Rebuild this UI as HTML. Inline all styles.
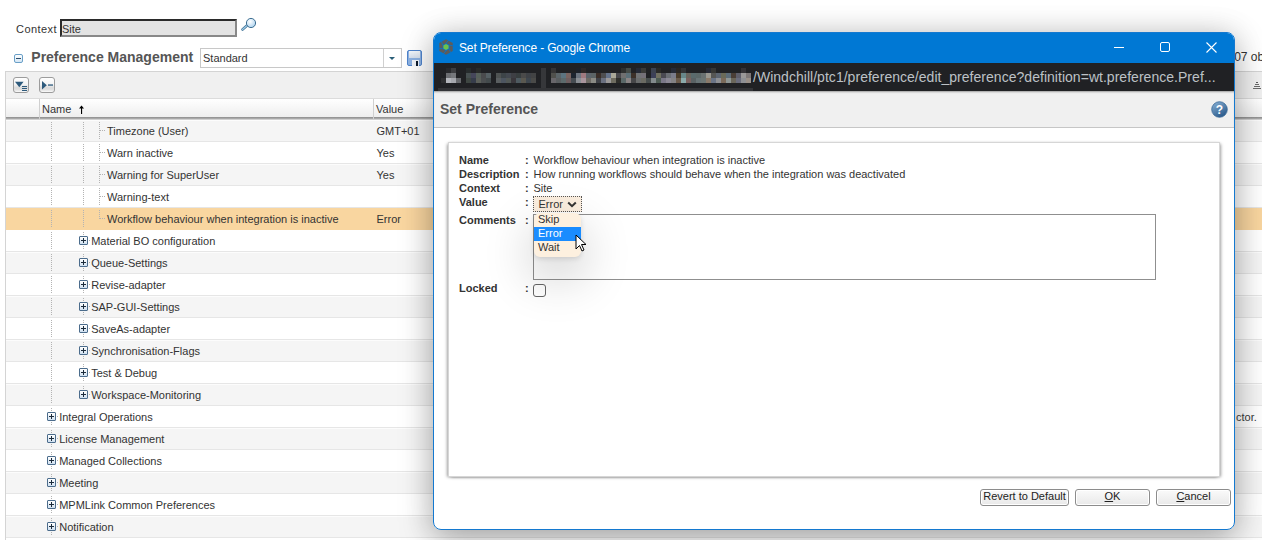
<!DOCTYPE html>
<html><head><meta charset="utf-8">
<style>
*{box-sizing:border-box}
html,body{margin:0;padding:0;width:1262px;height:540px;overflow:hidden;background:#fff;font-family:"Liberation Sans",sans-serif;color:#333}
.a{position:absolute;white-space:nowrap}
.t11{font-size:11px;line-height:13px}
.row{position:absolute;left:6px;width:1256px;height:22px;border-bottom:1px solid #e6e6e6}
.g{background:#f5f5f5;box-shadow:inset 0 1px 0 #fcfcfc}
.w{background:#fff}
.hl{background:#f9d6a0;border-bottom-color:#f9d6a0}
.vd{position:absolute;width:1px;top:0;height:22px;background-image:linear-gradient(#b3b3b3 50%,transparent 50%);background-size:1px 2px}
.hd{position:absolute;height:1px;width:6px;top:10px;background-image:linear-gradient(90deg,#b3b3b3 50%,transparent 50%);background-size:2px 1px}
.plus{position:absolute;width:9px;height:9px;border:1px solid #4b6c8c;border-radius:1px;background:linear-gradient(#fff,#cfe0f0)}
.plus:before{content:"";position:absolute;left:1px;top:3px;width:5px;height:1px;background:#1b2b3b}
.plus:after{content:"";position:absolute;left:3px;top:1px;width:1px;height:5px;background:#1b2b3b}
.rt{position:absolute;top:5px;font-size:11px;line-height:13px;color:#333;white-space:nowrap}
.btn{border:1px solid #8c8c8c;border-radius:3px;background:linear-gradient(#fafafa,#e9e9e9);box-shadow:inset 0 0 0 1px #fff;font-size:11px;line-height:13px;text-align:center;color:#222}
</style></head><body>

<!-- Context -->
<div class="a" style="left:16px;top:23px;font-size:11px;line-height:13px;color:#333;letter-spacing:0.45px">Context</div>
<div class="a" style="left:60px;top:19px;width:177px;height:18px;background:#e3e3e3;border:2px solid;border-color:#2a2a2a #888 #888 #2a2a2a"></div>
<div class="a" style="left:62px;top:23px;font-size:11px;line-height:13px;color:#333">Site</div>
<svg class="a" style="left:240px;top:16px" width="18" height="16" viewBox="0 0 18 16">
 <defs><radialGradient id="mg" cx="0.4" cy="0.35" r="0.7"><stop offset="0" stop-color="#fff"/><stop offset="1" stop-color="#a9d0ee"/></radialGradient></defs>
 <line x1="2.5" y1="13.5" x2="7" y2="9.5" stroke="#3e6f92" stroke-width="2.6" stroke-linecap="round"/>
 <line x1="2.5" y1="13.5" x2="7" y2="9.5" stroke="#9ccbe8" stroke-width="1.2" stroke-linecap="round"/>
 <circle cx="11" cy="7" r="4.6" fill="url(#mg)" stroke="#3e6f92" stroke-width="1"/>
</svg>

<!-- Preference Management -->
<div class="a" style="left:14px;top:54px;width:9px;height:9px;border:1px solid #6aa0c8;border-radius:2px;background:linear-gradient(#fff,#d4e6f5)"></div>
<div class="a" style="left:16px;top:58px;width:5px;height:1px;background:#2d4d6b"></div>
<div class="a" style="left:31.3px;top:49px;font-size:14px;line-height:16px;font-weight:bold;color:#555">Preference Management</div>
<div class="a" style="left:200px;top:48px;width:202px;height:20px;border:1px solid #c8c8c8;background:#fff"></div>
<div class="a" style="left:383px;top:49px;width:1px;height:18px;background:#d0d0d0"></div>
<div class="a" style="left:203px;top:52px;font-size:11px;line-height:13px;color:#333">Standard</div>
<div class="a" style="left:389px;top:57px;width:0;height:0;border-left:3px solid transparent;border-right:3px solid transparent;border-top:3px solid #2b5f78"></div>
<svg class="a" style="left:407px;top:50px" width="16" height="17" viewBox="0 0 16 17">
 <defs><linearGradient id="sg" x1="0" y1="0" x2="0" y2="1"><stop offset="0" stop-color="#f4f7fb"/><stop offset="1" stop-color="#d6e0ee"/></linearGradient></defs>
 <rect x="0.5" y="0.5" width="14" height="15" rx="1.5" fill="#8db2e3" stroke="#4f84cc"/>
 <rect x="2" y="1" width="11" height="7" fill="url(#sg)"/>
 <rect x="5" y="10" width="7" height="6" fill="#f2f5fa"/>
 <rect x="9" y="11" width="2" height="5" fill="#0d1a2b"/>
</svg>
<div class="a" style="left:1227.5px;top:50px;font-size:12px;line-height:14px;color:#333">207 objects</div>
<div class="a" style="left:1236px;top:411px;font-size:11px;line-height:13px;color:#333;z-index:1">ctor.</div>
<svg class="a" style="left:1252px;top:80px;z-index:1" width="10" height="10" viewBox="0 0 10 10" shape-rendering="crispEdges"><rect x="4" y="2" width="2" height="1" fill="#555"/><rect x="3" y="4" width="4" height="1" fill="#666"/><rect x="2" y="6" width="6" height="1" fill="#666"/><rect x="1" y="8" width="8" height="1" fill="#666"/></svg>

<!-- Table frame -->
<div class="a" style="left:5px;top:71px;width:1262px;height:469px;border-left:1px solid #d4d4d4;border-top:1px solid #d4d4d4"></div>
<div class="a" style="left:6px;top:72px;width:1256px;height:26px;background:#f0f0f0"></div>
<!-- toolbar buttons -->
<div class="a" style="left:13px;top:77px;width:16px;height:16px;border:1px solid #9c9c9c;border-radius:3px;background:linear-gradient(#fefefe 0%,#f4f4f4 45%,#dadada 70%,#e2e2e2 85%,#fbfbfb 100%)"></div>
<svg class="a" style="left:14px;top:78px" width="14" height="14" viewBox="0 0 14 14">
 <path d="M1 3.8 H9.6 L5.3 9.2 Z" fill="#2d5a7c"/>
 <rect x="8" y="8" width="5" height="1" fill="#2d5a7c"/><rect x="8" y="10" width="5" height="1" fill="#2d5a7c"/><rect x="8" y="12" width="5" height="1" fill="#2d5a7c"/>
</svg>
<div class="a" style="left:39px;top:77px;width:16px;height:16px;border:1px solid #9c9c9c;border-radius:3px;background:linear-gradient(#fefefe 0%,#f4f4f4 45%,#dadada 70%,#e2e2e2 85%,#fbfbfb 100%)"></div>
<svg class="a" style="left:40px;top:78px" width="14" height="14" viewBox="0 0 14 14">
 <path d="M2 3 L6.8 7.2 L2 11.4 Z" fill="#2d5a7c"/>
 <rect x="8" y="6.4" width="5" height="1.3" fill="#2d5a7c"/>
</svg>
<!-- header -->
<div class="a" style="left:6px;top:98px;width:1256px;height:21px;background:linear-gradient(#ffffff,#ececec);border-top:1px solid #dcdcdc"></div>
<div class="a" style="left:6px;top:117px;width:1256px;height:3px;background:linear-gradient(#8c8c8c,#a8a8a8 50%,#e4e4e4)"></div>
<div class="a" style="left:39px;top:99px;width:1px;height:20px;background:#d0d0d0"></div>
<div class="a" style="left:373px;top:99px;width:1px;height:20px;background:#d0d0d0"></div>
<div class="a t11" style="left:42px;top:103px;color:#333">Name</div>
<svg class="a" style="left:78px;top:105px" width="7" height="10" viewBox="0 0 7 10"><path d="M3.5 0.5 L6 3.5 L1 3.5 Z" fill="#000"/><rect x="3" y="2" width="1.1" height="7" fill="#000"/></svg>
<div class="a t11" style="left:376px;top:103px;color:#333">Value</div>

<!-- rows -->
<div class="row g" style="top:120px"><div class="vd" style="left:45px;top:2px;height:18px"></div><div class="vd" style="left:77px;top:2px;height:18px"></div><div class="vd" style="left:93px;top:2px;height:18px"></div><div class="hd" style="left:94px"></div><div class="rt" style="left:101px">Timezone (User)</div><div class="rt" style="left:370.5px">GMT+01</div></div>
<div class="row w" style="top:142px"><div class="vd" style="left:45px;top:2px;height:18px"></div><div class="vd" style="left:77px;top:2px;height:18px"></div><div class="vd" style="left:93px;top:2px;height:18px"></div><div class="hd" style="left:94px"></div><div class="rt" style="left:101px">Warn inactive</div><div class="rt" style="left:370.5px">Yes</div></div>
<div class="row g" style="top:164px"><div class="vd" style="left:45px;top:2px;height:18px"></div><div class="vd" style="left:77px;top:2px;height:18px"></div><div class="vd" style="left:93px;top:2px;height:18px"></div><div class="hd" style="left:94px"></div><div class="rt" style="left:101px">Warning for SuperUser</div><div class="rt" style="left:370.5px">Yes</div></div>
<div class="row w" style="top:186px"><div class="vd" style="left:45px;top:2px;height:18px"></div><div class="vd" style="left:77px;top:2px;height:18px"></div><div class="vd" style="left:93px;top:2px;height:18px"></div><div class="hd" style="left:94px"></div><div class="rt" style="left:101px">Warning-text</div></div>
<div class="row hl" style="top:208px"><div class="vd" style="left:45px;top:2px;height:18px"></div><div class="vd" style="left:77px;top:2px;height:18px"></div><div class="vd" style="left:93px;top:2px;height:9px"></div><div class="hd" style="left:94px"></div><div class="rt" style="left:101px">Workflow behaviour when integration is inactive</div><div class="rt" style="left:370.5px">Error</div></div>
<div class="row w" style="top:230px"><div class="vd" style="left:45px;top:2px;height:18px"></div><div class="vd" style="left:77px;top:2px;height:4px"></div><div class="vd" style="left:77px;top:16px;height:4px"></div><div class="plus" style="left:73px;top:6px"></div><div class="hd" style="left:83px;width:2px"></div><div class="rt" style="left:85.2px">Material BO configuration</div></div>
<div class="row g" style="top:252px"><div class="vd" style="left:45px;top:2px;height:18px"></div><div class="vd" style="left:77px;top:2px;height:4px"></div><div class="vd" style="left:77px;top:16px;height:4px"></div><div class="plus" style="left:73px;top:6px"></div><div class="hd" style="left:83px;width:2px"></div><div class="rt" style="left:85.2px">Queue-Settings</div></div>
<div class="row w" style="top:274px"><div class="vd" style="left:45px;top:2px;height:18px"></div><div class="vd" style="left:77px;top:2px;height:4px"></div><div class="vd" style="left:77px;top:16px;height:4px"></div><div class="plus" style="left:73px;top:6px"></div><div class="hd" style="left:83px;width:2px"></div><div class="rt" style="left:85.2px">Revise-adapter</div></div>
<div class="row g" style="top:296px"><div class="vd" style="left:45px;top:2px;height:18px"></div><div class="vd" style="left:77px;top:2px;height:4px"></div><div class="vd" style="left:77px;top:16px;height:4px"></div><div class="plus" style="left:73px;top:6px"></div><div class="hd" style="left:83px;width:2px"></div><div class="rt" style="left:85.2px">SAP-GUI-Settings</div></div>
<div class="row w" style="top:318px"><div class="vd" style="left:45px;top:2px;height:18px"></div><div class="vd" style="left:77px;top:2px;height:4px"></div><div class="vd" style="left:77px;top:16px;height:4px"></div><div class="plus" style="left:73px;top:6px"></div><div class="hd" style="left:83px;width:2px"></div><div class="rt" style="left:85.2px">SaveAs-adapter</div></div>
<div class="row g" style="top:340px"><div class="vd" style="left:45px;top:2px;height:18px"></div><div class="vd" style="left:77px;top:2px;height:4px"></div><div class="vd" style="left:77px;top:16px;height:4px"></div><div class="plus" style="left:73px;top:6px"></div><div class="hd" style="left:83px;width:2px"></div><div class="rt" style="left:85.2px">Synchronisation-Flags</div></div>
<div class="row w" style="top:362px"><div class="vd" style="left:45px;top:2px;height:18px"></div><div class="vd" style="left:77px;top:2px;height:4px"></div><div class="vd" style="left:77px;top:16px;height:4px"></div><div class="plus" style="left:73px;top:6px"></div><div class="hd" style="left:83px;width:2px"></div><div class="rt" style="left:85.2px">Test &amp; Debug</div></div>
<div class="row g" style="top:384px"><div class="vd" style="left:45px;top:2px;height:18px"></div><div class="vd" style="left:77px;top:2px;height:4px"></div><div class="plus" style="left:73px;top:6px"></div><div class="hd" style="left:83px;width:2px"></div><div class="rt" style="left:85.2px">Workspace-Monitoring</div></div>
<div class="row w" style="top:406px"><div class="vd" style="left:45px;top:2px;height:4px"></div><div class="vd" style="left:45px;top:16px;height:4px"></div><div class="plus" style="left:41px;top:6px"></div><div class="hd" style="left:51px;width:2px"></div><div class="rt" style="left:53.2px">Integral Operations</div></div>
<div class="row g" style="top:428px"><div class="vd" style="left:45px;top:2px;height:4px"></div><div class="vd" style="left:45px;top:16px;height:4px"></div><div class="plus" style="left:41px;top:6px"></div><div class="hd" style="left:51px;width:2px"></div><div class="rt" style="left:53.2px">License Management</div></div>
<div class="row w" style="top:450px"><div class="vd" style="left:45px;top:2px;height:4px"></div><div class="vd" style="left:45px;top:16px;height:4px"></div><div class="plus" style="left:41px;top:6px"></div><div class="hd" style="left:51px;width:2px"></div><div class="rt" style="left:53.2px">Managed Collections</div></div>
<div class="row g" style="top:472px"><div class="vd" style="left:45px;top:2px;height:4px"></div><div class="vd" style="left:45px;top:16px;height:4px"></div><div class="plus" style="left:41px;top:6px"></div><div class="hd" style="left:51px;width:2px"></div><div class="rt" style="left:53.2px">Meeting</div></div>
<div class="row w" style="top:494px"><div class="vd" style="left:45px;top:2px;height:4px"></div><div class="vd" style="left:45px;top:16px;height:4px"></div><div class="plus" style="left:41px;top:6px"></div><div class="hd" style="left:51px;width:2px"></div><div class="rt" style="left:53.2px">MPMLink Common Preferences</div></div>
<div class="row g" style="top:516px"><div class="vd" style="left:45px;top:2px;height:4px"></div><div class="vd" style="left:45px;top:16px;height:4px"></div><div class="plus" style="left:41px;top:6px"></div><div class="hd" style="left:51px;width:2px"></div><div class="rt" style="left:53.2px">Notification</div></div>

<!-- Dialog shadow -->
<div class="a" style="left:433px;top:32px;width:802px;height:498px;border-radius:8px;box-shadow:0 10px 34px rgba(0,0,0,0.27),0 0 30px rgba(0,0,0,0.12)"></div>
<!-- Dialog -->
<div class="a" id="dlg" style="left:433px;top:32px;width:802px;height:498px;border-radius:8px;border:1px solid #1479d0;background:#fff;overflow:hidden">
 <div class="a" style="left:0;top:0;width:800px;height:30px;background:#0078d4"></div>
 <svg class="a" style="left:4px;top:5px" width="16" height="18" viewBox="-8 -9 16 18">
  <polygon points="0.00,-7.80 6.75,-3.90 6.75,3.90 0.00,7.80 -6.75,3.90 -6.75,-3.90" fill="#5c5c5c"/>
  <line x1="0.00" y1="-3.70" x2="3.21" y2="-7.53" stroke="#0a74c8" stroke-width="0.9"/><line x1="3.20" y1="-1.85" x2="8.13" y2="-0.98" stroke="#0a74c8" stroke-width="0.9"/><line x1="3.20" y1="1.85" x2="4.91" y2="6.55" stroke="#0a74c8" stroke-width="0.9"/><line x1="0.00" y1="3.70" x2="-3.21" y2="7.53" stroke="#0a74c8" stroke-width="0.9"/><line x1="-3.20" y1="1.85" x2="-8.13" y2="0.98" stroke="#0a74c8" stroke-width="0.9"/><line x1="-3.20" y1="-1.85" x2="-4.91" y2="-6.55" stroke="#0a74c8" stroke-width="0.9"/>
  <polygon points="0.00,-3.90 3.38,-1.95 3.38,1.95 0.00,3.90 -3.38,1.95 -3.38,-1.95" fill="#0a74c8"/>
  <polygon points="0.00,-3.00 2.60,-1.50 2.60,1.50 0.00,3.00 -2.60,1.50 -2.60,-1.50" fill="#6cc24a"/>
 </svg>
 <div class="a" style="left:25px;top:8px;font-size:12px;line-height:14px;color:#fff;letter-spacing:-0.15px">Set Preference - Google Chrome</div>
 <div class="a" style="left:680px;top:14px;width:10px;height:1px;background:#fff"></div>
 <div class="a" style="left:726px;top:9px;width:10px;height:10px;border:1px solid #fff;border-radius:2px"></div>
 <svg class="a" style="left:772px;top:9px" width="11" height="11" viewBox="0 0 11 11"><path d="M0.5 0.5 L10.5 10.5 M10.5 0.5 L0.5 10.5" stroke="#fff" stroke-width="1.1"/></svg>
 <div class="a" style="left:0;top:30px;width:800px;height:28px;background:#202124"></div>
 <svg class="a" style="left:0;top:0" width="800" height="62" shape-rendering="crispEdges"><rect x="12" y="35" width="5" height="5" fill="#28292c"/><rect x="17" y="35" width="5" height="5" fill="#3d3e41"/><rect x="32" y="35" width="5" height="5" fill="#272c2d"/><rect x="37" y="35" width="5" height="5" fill="#222126"/><rect x="42" y="35" width="5" height="5" fill="#292b2a"/><rect x="117" y="35" width="5" height="5" fill="#353435"/><rect x="142" y="35" width="5" height="5" fill="#1e222a"/><rect x="147" y="35" width="5" height="5" fill="#2e2828"/><rect x="187" y="35" width="5" height="5" fill="#2e302f"/><rect x="192" y="35" width="5" height="5" fill="#464c48"/><rect x="202" y="35" width="5" height="5" fill="#262a36"/><rect x="207" y="35" width="5" height="5" fill="#3a3a38"/><rect x="217" y="35" width="5" height="5" fill="#3c4250"/><rect x="222" y="35" width="5" height="5" fill="#2a2a28"/><rect x="237" y="35" width="5" height="5" fill="#262a36"/><rect x="242" y="35" width="5" height="5" fill="#2a2622"/><rect x="247" y="35" width="5" height="5" fill="#333436"/><rect x="272" y="35" width="5" height="5" fill="#262a36"/><rect x="277" y="35" width="5" height="5" fill="#363634"/><rect x="307" y="35" width="5" height="5" fill="#343236"/><rect x="12" y="40" width="5" height="5" fill="#6b6d71"/><rect x="17" y="40" width="5" height="5" fill="#76787c"/><rect x="32" y="40" width="5" height="5" fill="#464f50"/><rect x="37" y="40" width="5" height="5" fill="#45465a"/><rect x="42" y="40" width="5" height="5" fill="#56605a"/><rect x="47" y="40" width="5" height="5" fill="#4a4b4d"/><rect x="52" y="40" width="5" height="5" fill="#566064"/><rect x="62" y="40" width="5" height="5" fill="#4e5252"/><rect x="67" y="40" width="5" height="5" fill="#3d4448"/><rect x="72" y="40" width="5" height="5" fill="#434850"/><rect x="77" y="40" width="5" height="5" fill="#3e3f44"/><rect x="82" y="40" width="5" height="5" fill="#373d3e"/><rect x="87" y="40" width="5" height="5" fill="#4a4a4a"/><rect x="92" y="40" width="5" height="5" fill="#3e4146"/><rect x="97" y="40" width="5" height="5" fill="#424344"/><rect x="117" y="40" width="5" height="5" fill="#50504c"/><rect x="122" y="40" width="5" height="5" fill="#5b6468"/><rect x="127" y="40" width="5" height="5" fill="#5c7480"/><rect x="132" y="40" width="5" height="5" fill="#7a6460"/><rect x="137" y="40" width="5" height="5" fill="#1e2530"/><rect x="142" y="40" width="5" height="5" fill="#6c7480"/><rect x="147" y="40" width="5" height="5" fill="#a07a80"/><rect x="152" y="40" width="5" height="5" fill="#5c646c"/><rect x="157" y="40" width="5" height="5" fill="#5c6466"/><rect x="162" y="40" width="5" height="5" fill="#3a2e28"/><rect x="167" y="40" width="5" height="5" fill="#4e4e50"/><rect x="172" y="40" width="5" height="5" fill="#64728a"/><rect x="177" y="40" width="5" height="5" fill="#aaa898"/><rect x="182" y="40" width="5" height="5" fill="#48484c"/><rect x="187" y="40" width="5" height="5" fill="#707070"/><rect x="192" y="40" width="5" height="5" fill="#5c7078"/><rect x="197" y="40" width="5" height="5" fill="#3c3028"/><rect x="202" y="40" width="5" height="5" fill="#707274"/><rect x="207" y="40" width="5" height="5" fill="#747078"/><rect x="217" y="40" width="5" height="5" fill="#3c4058"/><rect x="222" y="40" width="5" height="5" fill="#707060"/><rect x="227" y="40" width="5" height="5" fill="#4a4a52"/><rect x="232" y="40" width="5" height="5" fill="#6a6e74"/><rect x="237" y="40" width="5" height="5" fill="#7a7c8a"/><rect x="242" y="40" width="5" height="5" fill="#4a3c2a"/><rect x="247" y="40" width="5" height="5" fill="#68888a"/><rect x="252" y="40" width="5" height="5" fill="#6a665e"/><rect x="257" y="40" width="5" height="5" fill="#5a6a6c"/><rect x="262" y="40" width="5" height="5" fill="#5c6868"/><rect x="267" y="40" width="5" height="5" fill="#6a7272"/><rect x="272" y="40" width="5" height="5" fill="#9a9890"/><rect x="277" y="40" width="5" height="5" fill="#565654"/><rect x="282" y="40" width="5" height="5" fill="#5c6470"/><rect x="287" y="40" width="5" height="5" fill="#6a6a58"/><rect x="292" y="40" width="5" height="5" fill="#5c6c78"/><rect x="297" y="40" width="5" height="5" fill="#4a3e36"/><rect x="302" y="40" width="5" height="5" fill="#5e5e6a"/><rect x="307" y="40" width="5" height="5" fill="#9a9898"/><rect x="312" y="40" width="5" height="5" fill="#7e7878"/><rect x="7" y="45" width="5" height="5" fill="#2e2f31"/><rect x="12" y="45" width="5" height="5" fill="#b4b6bc"/><rect x="17" y="45" width="5" height="5" fill="#a5a7ad"/><rect x="22" y="45" width="5" height="5" fill="#66686c"/><rect x="32" y="45" width="5" height="5" fill="#3e4642"/><rect x="37" y="45" width="5" height="5" fill="#363c4a"/><rect x="42" y="45" width="5" height="5" fill="#5c605a"/><rect x="47" y="45" width="5" height="5" fill="#4b4e50"/><rect x="52" y="45" width="5" height="5" fill="#434a4c"/><rect x="62" y="45" width="5" height="5" fill="#5a5e60"/><rect x="67" y="45" width="5" height="5" fill="#4d5560"/><rect x="72" y="45" width="5" height="5" fill="#525856"/><rect x="77" y="45" width="5" height="5" fill="#3a373c"/><rect x="82" y="45" width="5" height="5" fill="#4e5a60"/><rect x="87" y="45" width="5" height="5" fill="#5a5850"/><rect x="92" y="45" width="5" height="5" fill="#3e464e"/><rect x="97" y="45" width="5" height="5" fill="#4a4a48"/><rect x="117" y="45" width="5" height="5" fill="#68666a"/><rect x="122" y="45" width="5" height="5" fill="#5a5e60"/><rect x="127" y="45" width="5" height="5" fill="#5c6a6c"/><rect x="132" y="45" width="5" height="5" fill="#6e5e60"/><rect x="137" y="45" width="5" height="5" fill="#464c52"/><rect x="142" y="45" width="5" height="5" fill="#8a8e94"/><rect x="147" y="45" width="5" height="5" fill="#a8949c"/><rect x="152" y="45" width="5" height="5" fill="#6e6a64"/><rect x="157" y="45" width="5" height="5" fill="#8a8a84"/><rect x="162" y="45" width="5" height="5" fill="#3e4046"/><rect x="167" y="45" width="5" height="5" fill="#6a7080"/><rect x="172" y="45" width="5" height="5" fill="#9a9898"/><rect x="177" y="45" width="5" height="5" fill="#6e6c60"/><rect x="182" y="45" width="5" height="5" fill="#2e2e2a"/><rect x="187" y="45" width="5" height="5" fill="#5a6868"/><rect x="192" y="45" width="5" height="5" fill="#8a8484"/><rect x="197" y="45" width="5" height="5" fill="#464648"/><rect x="202" y="45" width="5" height="5" fill="#6a6c6c"/><rect x="207" y="45" width="5" height="5" fill="#6a6a62"/><rect x="212" y="45" width="5" height="5" fill="#464c4c"/><rect x="217" y="45" width="5" height="5" fill="#828a8c"/><rect x="222" y="45" width="5" height="5" fill="#4e5c54"/><rect x="227" y="45" width="5" height="5" fill="#7a7888"/><rect x="232" y="45" width="5" height="5" fill="#8a8894"/><rect x="237" y="45" width="5" height="5" fill="#828284"/><rect x="242" y="45" width="5" height="5" fill="#6a5a4a"/><rect x="247" y="45" width="5" height="5" fill="#8aaaaa"/><rect x="252" y="45" width="5" height="5" fill="#7a6260"/><rect x="257" y="45" width="5" height="5" fill="#5a6264"/><rect x="262" y="45" width="5" height="5" fill="#687476"/><rect x="267" y="45" width="5" height="5" fill="#6c7674"/><rect x="272" y="45" width="5" height="5" fill="#8a7a6a"/><rect x="277" y="45" width="5" height="5" fill="#6a7486"/><rect x="282" y="45" width="5" height="5" fill="#8e9094"/><rect x="287" y="45" width="5" height="5" fill="#7a6a5a"/><rect x="292" y="45" width="5" height="5" fill="#8e9694"/><rect x="297" y="45" width="5" height="5" fill="#6a665a"/><rect x="302" y="45" width="5" height="5" fill="#6a6c7c"/><rect x="307" y="45" width="5" height="5" fill="#8e9094"/><rect x="312" y="45" width="5" height="5" fill="#9a9088"/><rect x="107" y="35" width="5" height="20" fill="#36373a"/><rect x="4" y="55" width="315" height="3" fill="#333437"/></svg>
 <div class="a" style="left:319px;top:36px;font-size:14px;line-height:16px;color:#bdc1c6;letter-spacing:0.03px">/Windchill/ptc1/preference/edit_preference?definition=wt.preference.Pref...</div>
 <div class="a" style="left:0;top:58px;width:800px;height:37px;background:#f0f0f0;border-bottom:1px solid #c6c6c6;box-shadow:inset 0 2px 2px -1px rgba(0,0,0,0.35)"></div>
 <div class="a" style="left:6px;top:68px;font-size:14px;line-height:16px;font-weight:bold;color:#555">Set Preference</div>
 <svg class="a" style="left:777.2px;top:68.3px" width="17" height="17" viewBox="0 0 17 17">
  <defs><linearGradient id="hg" x1="0" y1="0" x2="0.6" y2="1"><stop offset="0" stop-color="#8db4d8"/><stop offset="1" stop-color="#2b5b8c"/></linearGradient></defs>
  <circle cx="8.5" cy="8.5" r="7.8" fill="url(#hg)" stroke="#3a6a98" stroke-width="0.8"/>
  <text x="8.5" y="13" text-anchor="middle" font-family="Liberation Sans" font-weight="bold" font-size="12" fill="#fff">?</text>
 </svg>
 <!-- panel -->
 <div class="a" style="left:14px;top:109px;width:772px;height:335px;background:#fff;border:1px solid #d6d6d6;box-shadow:2px 1px 3px -1px rgba(0,0,0,0.35),-2px 1px 3px -1px rgba(0,0,0,0.35),0 0 2px rgba(0,0,0,0.08)"></div>
 <div class="a" style="left:25px;top:120px;font-size:11px;line-height:14px;font-weight:bold;color:#333">Name<br>Description<br>Context<br>Value</div>
 <div class="a" style="left:91px;top:120px;font-size:11px;line-height:14px;font-weight:bold;color:#333">:<br>:<br>:<br>:</div>
 <div class="a" style="left:99.5px;top:120px;font-size:11px;line-height:14px;color:#333">Workflow behaviour when integration is inactive<br>How running workflows should behave when the integration was deactivated<br>Site</div>
 <div class="a" style="left:25px;top:180px;font-size:11px;line-height:14px;font-weight:bold;color:#333">Comments</div>
 <div class="a" style="left:91px;top:180px;font-size:11px;line-height:14px;font-weight:bold;color:#333">:</div>
 <div class="a" style="left:25px;top:248px;font-size:11px;line-height:14px;font-weight:bold;color:#333">Locked</div>
 <div class="a" style="left:91px;top:248px;font-size:11px;line-height:14px;font-weight:bold;color:#333">:</div>
 <div class="a" style="left:99px;top:181px;width:623px;height:66px;border:1px solid #8f8f8f;background:#fff"></div>
 <div class="a" style="left:99px;top:251px;width:13px;height:13px;border:1px solid #666;border-radius:3px;background:#fff"></div>
 <!-- value select -->
 <div class="a" style="left:99px;top:163px;width:49px;height:16px;background:#fbeedf;border:1px dotted #555"></div>
 <div class="a" style="left:104.5px;top:164.5px;font-size:11px;line-height:13px;color:#333">Error</div>
 <svg class="a" style="left:133px;top:168px" width="10" height="7" viewBox="0 0 10 7"><path d="M1.2 1.5 L5 5.2 L8.8 1.5" fill="none" stroke="#333" stroke-width="2"/></svg>
 <!-- popup -->
 <div class="a" style="left:100px;top:180px;width:47px;height:44px;border-radius:6px;background:#fdf0df;box-shadow:0 18px 50px rgba(0,0,0,0.24),0 2px 5px rgba(0,0,0,0.12)"></div>
 <div class="a" style="left:100px;top:194px;width:47px;height:14px;background:#1a8cff"></div>
 <div class="a" style="left:104px;top:180px;font-size:11px;line-height:13px;color:#333">Skip</div>
 <div class="a" style="left:104px;top:193.6px;font-size:11px;line-height:13px;color:#fff">Error</div>
 <div class="a" style="left:104px;top:208px;font-size:11px;line-height:13px;color:#333">Wait</div>
 <svg class="a" style="left:141px;top:201px" width="14" height="20" viewBox="0 0 14 20"><path d="M1 1 L1 15 L4.5 11.5 L7 17 L9 16 L6.5 10.5 L11 10.5 Z" fill="#fff" stroke="#000" stroke-width="1" stroke-linejoin="round"/></svg>
 <!-- buttons -->
 <div class="a btn" style="left:546px;top:456px;width:89px;height:17px">Revert to Default</div>
 <div class="a btn" style="left:641px;top:456px;width:75px;height:17px"><u>O</u>K</div>
 <div class="a btn" style="left:722px;top:456px;width:75px;height:17px"><u>C</u>ancel</div>
</div>
</body></html>
